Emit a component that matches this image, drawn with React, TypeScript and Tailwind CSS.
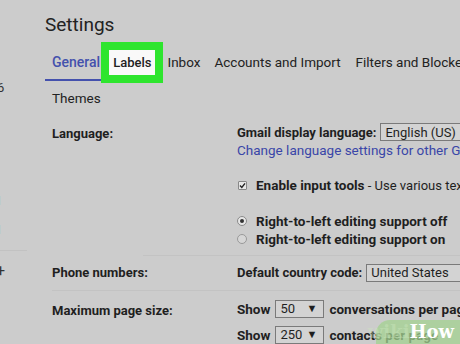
import React from "react";

function Select({ value, w, arrow }: { value: string; w: string; arrow?: boolean }) {
  return (
    <div className={`${w} h-[18px] border border-[#7a7a7a] bg-[#d3d3d3] flex items-center justify-between pl-[4px] pr-[6px] text-[13px] text-[#1f1f1f] shrink-0`}>
      <span>{value}</span>
      {arrow && <span className="text-[11px]">▼</span>}
    </div>
  );
}

export default function App() {
  return (
    <div className="w-[460px] h-[344px] overflow-hidden bg-[#cccccc] flex relative text-[#1f1f1f]" style={{ fontFamily: "Roboto, 'Noto Sans', sans-serif" }}>
      {/* sidebar */}
      <aside className="w-[45px] shrink-0 flex flex-col text-[13px] text-[#333]">
        <div className="h-[80px]" />
        <div className="h-[16px] leading-[16px] -ml-[3px]">6</div>
        <div className="h-[97px]" />
        <div className="h-[16px] leading-[16px] -ml-[5px]">1</div>
        <div className="h-[13px]" />
        <div className="h-[16px] leading-[16px] -ml-[5px]">1</div>
        <div className="h-[12px]" />
        <div className="w-[27px] border-t border-[#c2c2c2]" />
        <div className="h-[12px]" />
        <div className="h-[16px] leading-[16px] -ml-[4px] text-[16px]">+</div>
      </aside>

      <main className="flex-1 flex flex-col min-w-0">
        <h1 className="mt-[12px] h-[26px] text-[19px] leading-[26px] text-[#222]">Settings</h1>

        {/* tabs */}
        <div className="mt-[4px] h-[41px] flex items-stretch text-[13.5px] whitespace-nowrap text-[#222]">
          <div className="relative flex items-center pl-[7px] pr-[1px] text-[#4451ad] font-medium text-[14px]">
            General
            <div className="absolute left-0 right-0 bottom-[2px] h-[2px] bg-[#4451ad]" />
          </div>
          <div className="border-[8px] border-[#2ee52e] bg-[#f9f9f9] flex items-center px-[4px] font-medium text-[13px]">
            Labels
          </div>
          <div className="flex items-center ml-[4px]">Inbox</div>
          <div className="flex items-center ml-[14px]">Accounts and Import</div>
          <div className="flex items-center ml-[15px]">Filters and Blocked Addresses</div>
        </div>

        <div className="h-[31px] flex items-center pl-[7px] text-[13.5px] text-[#222]">Themes</div>

        {/* Language */}
        <div className="flex text-[13px]">
          <div className="w-[192px] shrink-0 pl-[7px] pt-[11px] font-bold">Language:</div>
          <div className="flex flex-col min-w-0">
            <div className="mt-[10px] h-[18px] flex items-center whitespace-nowrap">
              <span className="font-bold mr-[4px]">Gmail display language:</span>
              <Select value="English (US)" w="w-[120px]" />
            </div>
            <div className="h-[18px] leading-[18px] text-[#3a46a8] text-[13.5px] whitespace-nowrap">Change language settings for other Google products</div>
            <div className="mt-[17px] h-[18px] flex items-center whitespace-nowrap text-[13.5px]">
              <div className="w-[9px] h-[9px] ml-[1px] mr-[9px] bg-[#e8e8e8] border border-[#888] rounded-[1px] flex items-center justify-center">
                <svg width="7" height="7" viewBox="0 0 7 7"><path d="M1 3.6 L2.8 5.4 L6 1.4" stroke="#222" strokeWidth="1.4" fill="none" /></svg>
              </div>
              <span className="font-bold">Enable input tools</span>
              <span className="text-[13px]">&nbsp;- Use various text input tools to type</span>
            </div>
            <div className="mt-[18px] h-[18px] flex items-center whitespace-nowrap text-[13.5px]">
              <div className="w-[10px] h-[10px] mr-[9px] rounded-full bg-[#e6e6e6] border border-[#8a8a8a] flex items-center justify-center">
                <div className="w-[4px] h-[4px] rounded-full bg-[#333]" />
              </div>
              <span className="font-bold">Right-to-left editing support off</span>
            </div>
            <div className="h-[18px] flex items-center whitespace-nowrap text-[13.5px]">
              <div className="w-[10px] h-[10px] mr-[9px] rounded-full bg-[#d6d6d6] border border-[#999]" />
              <span className="font-bold">Right-to-left editing support on</span>
            </div>
          </div>
        </div>

        <div className="mt-[7px] ml-[98px] border-t border-[#c3c3c3]" />

        {/* Phone numbers */}
        <div className="flex text-[13px] h-[34px] items-center">
          <div className="w-[192px] shrink-0 pl-[7px] font-bold">Phone numbers:</div>
          <div className="flex items-center whitespace-nowrap">
            <span className="font-bold mr-[4px]">Default country code:</span>
            <Select value="United States" w="w-[120px]" />
          </div>
        </div>

        <div className="ml-[7px] border-t border-[#c3c3c3]" />

        {/* Max page size */}
        <div className="flex text-[13px]">
          <div className="w-[192px] shrink-0 pl-[7px] pt-[10px] font-bold">Maximum page size:</div>
          <div className="flex flex-col text-[13.5px]">
            <div className="mt-[9px] h-[18px] flex items-center whitespace-nowrap">
              <span className="font-bold mr-[5px]">Show</span>
              <Select value="50" w="w-[49px]" arrow />
              <span className="font-bold ml-[5px]">conversations per page</span>
            </div>
            <div className="mt-[8px] h-[18px] flex items-center whitespace-nowrap">
              <span className="font-bold mr-[5px]">Show</span>
              <Select value="250" w="w-[49px]" arrow />
              <span className="font-bold ml-[5px]">contacts per page</span>
            </div>
          </div>
        </div>
      </main>

      {/* wikiHow watermark */}
      <div className="absolute right-0 bottom-0 w-[84px] h-[24px] rounded-tl-[14px] bg-[#a3d190]/75 flex items-center justify-end pr-[6px]">
        <span className="text-[18px] font-bold leading-none text-[#cde8c0]/40" style={{ fontFamily: "'DejaVu Serif', serif" }}>wiki</span>
        <span className="text-[18px] font-bold leading-none text-white" style={{ fontFamily: "'DejaVu Serif', serif" }}>How</span>
      </div>
    </div>
  );
}
